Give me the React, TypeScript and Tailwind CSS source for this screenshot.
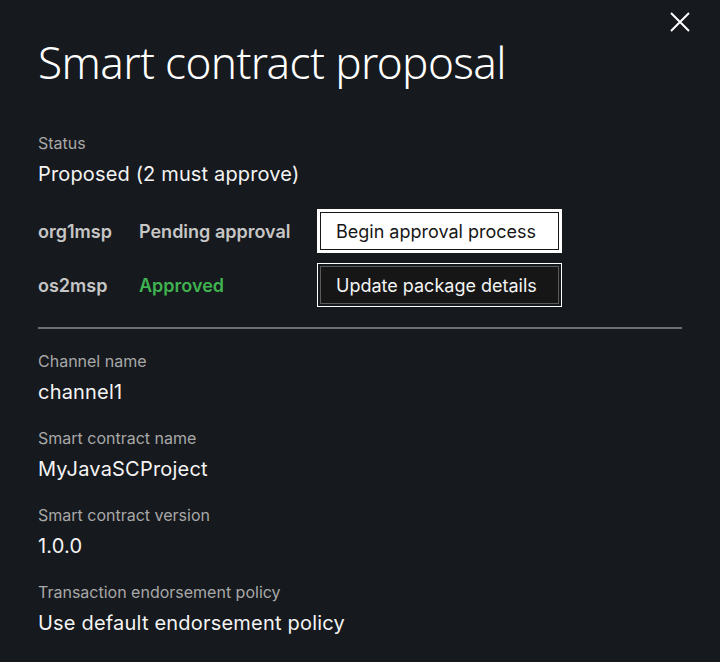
const titleFont = { fontFamily: '"Noto Sans", Inter, sans-serif' };
const bodyFont = { fontFamily: 'Inter, "Noto Sans", sans-serif' };

const orgs = [
  { name: "org1msp", status: "Pending approval", approved: false, action: "Begin approval process" },
  { name: "os2msp", status: "Approved", approved: true, action: "Update package details" },
];

const details = [
  { label: "Channel name", value: "channel1" },
  { label: "Smart contract name", value: "MyJavaSCProject" },
  { label: "Smart contract version", value: "1.0.0" },
  { label: "Transaction endorsement policy", value: "Use default endorsement policy" },
];

function ActionButton({ label, primary }: { label: string; primary: boolean }) {
  if (primary) {
    return (
      <div className="w-[245px] h-[44px] bg-white p-[3px]">
        <div className="h-full border border-[#161616] bg-white flex items-center pl-[15px] text-[18px] text-[#161616]">
          {label}
        </div>
      </div>
    );
  }
  return (
    <div className="w-[245px] h-[44px] border border-white p-[2px]">
      <div className="h-full border border-[#5a5a5a] bg-[#161616] flex items-center pl-[15px] text-[18px] text-[#f4f4f4]">
        {label}
      </div>
    </div>
  );
}

export default function App() {
  return (
    <div className="w-[720px] h-[662px] bg-[#16191d] relative overflow-hidden" style={bodyFont}>
      <button className="absolute left-[670px] top-[12px] text-white">
        <svg width="20" height="20" viewBox="0 0 20 20" fill="none" stroke="currentColor" strokeWidth="2">
          <path d="M1 1L19 19M19 1L1 19" />
        </svg>
      </button>

      <div className="px-[38px] pt-[34px]">
        <h1 className="text-[44px] leading-[56px] font-light text-white tracking-[-0.6px]" style={titleFont}>
          Smart contract proposal
        </h1>

        <div className="mt-[42px] text-[16px] leading-[22px] text-[#a8a8a8]">Status</div>
        <div className="mt-[6px] text-[20px] leading-[28px] text-[#f4f4f4] tracking-[0.15px]">
          Proposed (2 must approve)
        </div>

        <div className="mt-[21px] flex flex-col gap-[10px]">
          {orgs.map((o) => (
            <div key={o.name} className="flex items-center">
              <div className="w-[101px] text-[18px] font-semibold text-[#c6c6c6]">{o.name}</div>
              <div
                className={`w-[178px] text-[18px] font-semibold ${
                  o.approved ? "text-[#3fb34f]" : "text-[#c6c6c6]"
                }`}
              >
                {o.status}
              </div>
              <ActionButton label={o.action} primary={!o.approved} />
            </div>
          ))}
        </div>

        <div className="mt-[20px] h-[2px] bg-[#6f6f6f] w-[644px]" />

        <div className="mt-[21px] flex flex-col gap-[21px]">
          {details.map((d) => (
            <div key={d.label}>
              <div className="text-[16px] leading-[22px] text-[#a8a8a8]">{d.label}</div>
              <div className="mt-[6px] text-[20px] leading-[28px] text-[#f4f4f4] tracking-[0.2px]">{d.value}</div>
            </div>
          ))}
        </div>
      </div>
    </div>
  );
}
